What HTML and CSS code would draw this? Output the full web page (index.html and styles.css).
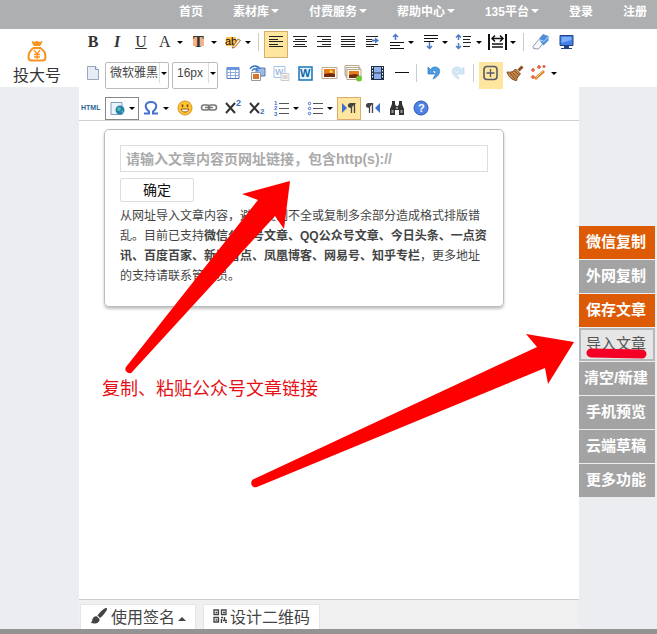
FILE: index.html
```
<!doctype html>
<html lang="zh-CN">
  <head>
    <meta charset="UTF-8" />
    <meta name="viewport" content="width=device-width, initial-scale=1.0" />
    <title>135编辑器</title>
    <link rel="stylesheet" href="styles.css">
  </head>
  <body>
    <nav class="topnav">
      <a href="#">首页</a>
      <a href="#" class="more">素材库</a>
      <a href="#" class="more">付费服务</a>
      <a href="#" class="more">帮助中心</a>
      <a href="#" class="more">135平台</a>
      <a href="#">登录</a>
      <a href="#">注册</a>
    </nav>

    <main class="workspace">
      <aside class="left">
        <a href="#" class="brand">
          <svg width="22" height="22" viewBox="0 0 22 22" fill="none" stroke="#f7941d" stroke-width="2">
            <path d="M6 1.500l2 1 3-1 3 1 2-1-2 4H8z" fill="#f7941d" stroke-width="1" />
            <path d="M7.500 8h7c3 2 5 6 5 9 0 2-1 3.500-3 3.500h-11c-2 0-3-1.500-3-3.500 0-3 2-7 5-9z" />
            <path d="M8 10l3 4 3-4M11 14v5M8 14.500h6M8 17h6" stroke-width="1.300" />
          </svg>
          <span>投大号</span>
        </a>
      </aside>

      <section class="editor">
        <div class="toolbar">
          <div class="row">
            <button class="tool letter semi" aria-label="加粗">B</button>
            <button class="tool letter italic" aria-label="斜体">I</button>
            <button class="tool letter underline" aria-label="下划线">U</button>
            <button class="tool letter drop" aria-label="字体边框">A</button>
            <button class="tool letter semi drop" aria-label="字体颜色"><span class="forecolor">T</span></button>
            <button class="tool drop" aria-label="背景色">
              <svg viewBox="0 0 20 20"><path d="M3 5h10v9H3z" fill="#ffbd4a" /><text x="2" y="13" font-size="11" fill="#111">ab</text><path d="M9 16l6-9 2.500 1.500-6 7z" fill="#fff3cf" stroke="#b5651d" /></svg>
            </button>
            <span class="sep"></span>
            <button class="tool on" aria-label="左对齐">
              <svg viewBox="0 0 20 20"><path d="M3 4.500h14M3 7.500h9M3 9.500h14M3 12.500h9M3 14.500h14" stroke="#222" /></svg>
            </button>
            <button class="tool" aria-label="居中">
              <svg viewBox="0 0 20 20"><path d="M3 4.500h14M5 7.500h10M3 9.500h14M5 12.500h10M3 14.500h14" stroke="#222" /></svg>
            </button>
            <button class="tool" aria-label="右对齐">
              <svg viewBox="0 0 20 20"><path d="M3 4.500h14M8 7.500h9M3 9.500h14M8 12.500h9M3 14.500h14" stroke="#222" /></svg>
            </button>
            <button class="tool" aria-label="两端对齐">
              <svg viewBox="0 0 20 20"><path d="M3 4.500h14M3 7.500h14M3 9.500h14M3 12.500h14M3 14.500h14" stroke="#222" /></svg>
            </button>
            <button class="tool" aria-label="首行缩进">
              <svg viewBox="0 0 20 20"><path d="M4 4.500h12M4 7.500h6M4 9.500h6M4 12.500h12M4 14.500h8" stroke="#222" /><path d="M10 8.500h4" stroke="#4b79c4" stroke-width="2" /><path d="M13 5.500l4 3-4 3z" fill="#4b79c4" /></svg>
            </button>
            <button class="tool drop" aria-label="段前距">
              <svg viewBox="0 0 20 20"><path d="M4 10.500h14M4 13.500h10M4 16.500h14" stroke="#111" /><path d="M9.500 8V2.500M7 5L9.500 2.500 12 5" fill="none" stroke="#4b79c4" stroke-width="1.500" /></svg>
            </button>
            <button class="tool drop" aria-label="段后距">
              <svg viewBox="0 0 20 20"><path d="M4 3.500h14M4 6.500h14M4 9.500h10" stroke="#111" /><path d="M9.500 10v6.500M7 14l2.500 2.500 2.500-2.500" fill="none" stroke="#4b79c4" stroke-width="1.500" /></svg>
            </button>
            <button class="tool drop" aria-label="行间距">
              <svg viewBox="0 0 20 20"><path d="M9 4.500h8M9 7.500h7M9 10.500h8M9 14.500h7" stroke="#222" /><path d="M4.500 8V3M2 5.500L4.500 3 7 5.500M4.500 11v6M2 14l2.500 2.500L7 14" fill="none" stroke="#4b79c4" stroke-width="1.500" /></svg>
            </button>
            <button class="tool drop" aria-label="字间距">
              <svg viewBox="0 0 20 20"><path d="M1 2v16M18 2v16" stroke="#111" stroke-width="2" /><path d="M4 6.500h11M7 3.500l-3 3 3 3M12 3.500l3 3-3 3M4 12h11M4 15h11" fill="none" stroke="#111" stroke-width="1.500" /></svg>
            </button>
            <span class="sep"></span>
            <button class="tool" aria-label="清除格式">
              <svg viewBox="0 0 20 20"><path d="M2 14.500L12 2.500l5.500 2-10 12.500-5-.5z" fill="#f4f8fd" stroke="#8d9bb0" /><path d="M8 7.500l4-5 5.500 2v4l-5 5z" fill="#4c8edb" /><path d="M8 7.500l5 2 4.500-5" fill="none" stroke="#bcdcff" /></svg>
            </button>
            <button class="tool" aria-label="全屏">
              <svg viewBox="0 0 20 20"><path d="M5 3.500h13v10H5z" fill="#4180e8" stroke="#24427e" /><path d="M6.500 5h10v3l-10 3z" fill="#77adfa" /><path d="M9 14h5v2H9z" fill="#24427e" /><path d="M6 16.500h11" stroke="#24427e" /></svg>
            </button>
          </div>

          <div class="row">
            <button class="tool" aria-label="新建">
              <svg viewBox="0 0 20 20"><path d="M4.500 3.500h8l3 3v10h-11z" fill="#e6ecf4" stroke="#9aa7b8" /><path d="M12.500 3.500v3h3" fill="#fff" stroke="#8295ad" /></svg>
            </button>
            <div class="combo family">
              <select aria-label="字体"><option>微软雅黑</option><option>宋体</option></select>
              <span class="arrow"></span>
            </div>
            <div class="combo size">
              <select aria-label="字号"><option>16px</option><option>14px</option></select>
              <span class="arrow"></span>
            </div>
            <button class="tool" aria-label="表格">
              <svg viewBox="0 0 20 20"><path d="M4 4.500h12v11H4z" fill="#fff" stroke="#5177bb" /><path d="M4 4h12v3H4z" fill="#6796df" /><path d="M4 9.500h12M4 12.500h12M7.500 7v8M12.500 7v8" stroke="#8eace0" /></svg>
            </button>
            <button class="tool" aria-label="截图">
              <svg viewBox="0 0 20 20"><path d="M9 5h9v8H9z" fill="#9dbce8" stroke="#5a78aa" /><path d="M3 6c2-4 8-4 10 0M5 8c1-3 5-3 6 0" fill="none" stroke="#3978c3" stroke-width="1.300" /><path d="M4.500 9.500h9v8h-9z" fill="#fff" stroke="#999" /><path d="M6 11h6v5H6z" fill="#d8742b" /></svg>
            </button>
            <button class="tool" aria-label="word转存">
              <svg viewBox="0 0 20 20" opacity=".5"><path d="M3 3.500h11v11H3z" fill="#fff" stroke="#4c8bcc" /><text x="4" y="12" font-size="9" font-weight="bold" fill="#3a7fc4">W</text><path d="M10 10.500h8v7h-8z" fill="#eee" stroke="#999" /><path d="M11.500 12h5v4h-5z" fill="#b9b2aa" /></svg>
            </button>
            <button class="tool" aria-label="导入word">
              <svg viewBox="0 0 20 20"><path d="M4 4h13v13H4z" fill="#e9f5ff" stroke="#1976b8" stroke-width="1.500" /><text x="5" y="14" font-size="11" font-weight="bold" fill="#0a65a8">W</text></svg>
            </button>
            <button class="tool" aria-label="图片">
              <svg viewBox="0 0 20 20"><path d="M3 4.500h15v11H3z" fill="#fff" stroke="#b9a78b" /><path d="M5 6h11v8H5z" fill="#e77c14" /><path d="M5 11l6-1 5 1v3H5z" fill="#762a0b" /><circle cx="12" cy="8.500" r="1.500" fill="#ffd84c" /></svg>
            </button>
            <button class="tool" aria-label="多图上传">
              <svg viewBox="0 0 20 20"><path d="M2 2.500h14v10H2zM3 4.500h14v10H3z" fill="#fff" stroke="#b9a78b" /><path d="M4 6.500h14v10H4z" fill="#fff" stroke="#b9a78b" /><path d="M6 8h10v7H6z" fill="#e77c14" /><path d="M6 12l6-1 4 1v3H6z" fill="#762a0b" /><circle cx="16" cy="15.500" r="3" fill="#71c837" /></svg>
            </button>
            <button class="tool" aria-label="视频">
              <svg viewBox="0 0 20 20"><path d="M4 3h13v14H4z" fill="#222e48" /><path d="M7 4h7v5.500H7zM7 10.500h7V16H7z" fill="#8caeea" /><path d="M5.500 4v12M15.500 4v12" stroke="#fff" stroke-dasharray="1.500 1.500" /></svg>
            </button>
            <button class="tool" aria-label="分隔线">
              <svg viewBox="0 0 20 20"><path d="M4 9.500h14" stroke="#111" /></svg>
            </button>
            <span class="sep"></span>
            <button class="tool" aria-label="撤销">
              <svg viewBox="0 0 20 20"><path d="M4 4v7h7L8.500 8.500c3-2 5 .5 1.500 5.500l-1 2c8-3 9-12 2-12-2 0-3.500.8-4.500 2.500z" fill="#4a9be0" stroke="#2c79bd" stroke-width=".7" /></svg>
            </button>
            <button class="tool" aria-label="重做">
              <svg viewBox="0 0 20 20"><path d="M16 4v7H9l2.500-2.500c-3-2-5 .5-1.500 5.500l1 2C3 13 2 4 9 4c2 0 3.500.8 4.500 2.500z" fill="#d3e8f6" stroke="#b8d5e8" stroke-width=".7" /></svg>
            </button>
            <span class="sep"></span>
            <button class="tool on flat" aria-label="插入框">
              <svg viewBox="0 0 20 20"><rect x="3" y="3.500" width="13" height="13" rx="3" fill="none" stroke="#555b68" stroke-width="1.600" /><path d="M9.500 6v8M5.500 10h8" stroke="#555b68" stroke-width="1.300" /></svg>
            </button>
            <button class="tool" aria-label="格式刷">
              <svg viewBox="0 0 20 20"><path d="M17.500 3.500l-4 4" stroke="#8d4f1d" stroke-width="3" /><path d="M2 9c4 .5 6 0 8.500-3l5 5c-2.500 2-3.500 4-4 6.500C7 17 3.500 14 2 9z" fill="#c98a4b" stroke="#78441a" /><path d="M9 7.500l5 4.500M5 10l5 6M7.500 9.500l4.500 5" stroke="#7c4b22" /></svg>
            </button>
            <button class="tool drop" aria-label="自动排版">
              <svg viewBox="0 0 20 20"><path d="M6 16L15 8" stroke="#d8842e" stroke-width="3" /><path d="M7 15l7-7" stroke="#ffd07e" /><path d="M4 5v4M2 7h4M10 2v4M8 4h4M15 2v3M13.500 3.500h3M4 12v4M2 14h4" stroke="#e85d37" stroke-width="1.500" /></svg>
            </button>
          </div>

          <div class="row last">
            <button class="tool html" aria-label="源代码">HTML</button>
            <button class="tool drop framed" aria-label="背景">
              <svg viewBox="0 0 20 20"><path d="M4 4.500h11v12H4z" fill="#e9f3fd" stroke="#7e9cbd" /><circle cx="13" cy="12" r="4.500" fill="#2583ae" /><path d="M11 9l3 1-1 3-3-1zM14 14l2-2v3z" fill="#62c2a0" /></svg>
            </button>
            <button class="tool drop" aria-label="特殊字符">
              <svg viewBox="0 0 20 20"><path d="M3 15.500h5v-2C2.500 9 4.500 4 10 4s7.500 5 2 9.500v2h5" fill="none" stroke="#476fd0" stroke-width="2" /></svg>
            </button>
            <button class="tool" aria-label="表情">
              <svg viewBox="0 0 20 20"><circle cx="10" cy="10" r="7" fill="#ffc735" stroke="#d99013" /><path d="M7.500 6.500v2.500M12.500 6.500v2.500" stroke="#744000" stroke-width="1.600" /><path d="M6 11h8c-.5 4-7.500 4-8 0z" fill="#fff" stroke="#98540b" /></svg>
            </button>
            <button class="tool" aria-label="超链接">
              <svg viewBox="0 0 20 20" fill="none" stroke="#777" stroke-width="1.500"><rect x="2.500" y="7" width="8" height="5" rx="2.500" /><rect x="9.500" y="7" width="8" height="5" rx="2.500" /><path d="M6 9.500h8" /></svg>
            </button>
            <button class="tool" aria-label="上标">
              <svg viewBox="0 0 20 20"><path d="M3 5l9 10M12 5l-9 10" stroke="#333" stroke-width="2" /><text x="13" y="8" font-size="9" font-weight="bold" fill="#3e6dc1">2</text></svg>
            </button>
            <button class="tool" aria-label="下标">
              <svg viewBox="0 0 20 20"><path d="M3 5l9 10M12 5l-9 10" stroke="#333" stroke-width="2" /><text x="13" y="16" font-size="8" font-weight="bold" fill="#3e6dc1">2</text></svg>
            </button>
            <button class="tool drop" aria-label="有序列表">
              <svg viewBox="0 0 20 20"><path d="M8 5.500h10M8 10.500h10M8 15.500h10" stroke="#555" /><g font-size="6" font-weight="bold" fill="#416fd0"><text x="3" y="7">1</text><text x="3" y="12">2</text><text x="3" y="18">3</text></g></svg>
            </button>
            <button class="tool drop" aria-label="无序列表">
              <svg viewBox="0 0 20 20"><path d="M8 5.500h10M8 10.500h10M8 15.500h10" stroke="#555" /><g fill="#fff" stroke="#416fd0"><circle cx="4.500" cy="5.500" r="1.200" /><circle cx="4.500" cy="10.500" r="1.200" /><circle cx="4.500" cy="15.500" r="1.200" /></g></svg>
            </button>
            <button class="tool on" aria-label="从左向右">
              <svg viewBox="0 0 20 20"><path d="M3 5l5 5-5 5z" fill="#3e70d1" /><path d="M17 5h-6c-3 1-3 5 1 5z" fill="#444" /><path d="M12.500 5v10M15.500 5v10" stroke="#444" stroke-width="1.300" /></svg>
            </button>
            <button class="tool" aria-label="从右向左">
              <svg viewBox="0 0 20 20"><path d="M17 5l-5 5 5 5z" fill="#3e70d1" /><path d="M10 5H5c-3 1-3 5 1 5z" fill="#444" /><path d="M6.500 5v10M9.500 5v10" stroke="#444" stroke-width="1.300" /></svg>
            </button>
            <button class="tool" aria-label="查找替换">
              <svg viewBox="0 0 20 20" fill="#333"><path d="M5 3h3v3l1 2h2l1-2V3h3v3l2 5v6h-5v-5H8v5H3v-6l2-5z" /><path d="M4.500 12h2v3h-2zM13.500 12h2v3h-2zM9 9h2v2H9z" fill="#999" /></svg>
            </button>
            <button class="tool" aria-label="帮助">
              <svg viewBox="0 0 20 20"><circle cx="10" cy="10" r="7" fill="#4f82e5" stroke="#2c55af" /><text x="7" y="14" font-size="11" font-weight="bold" fill="#fff">?</text></svg>
            </button>
          </div>
        </div>

        <div class="canvas">
          <form class="import">
            <input type="text" aria-label="文章网址" placeholder="请输入文章内容页网址链接，包含http(s)://">
            <button type="button">确定</button>
            <p>从网址导入文章内容，避免复制不全或复制多余部分造成格式排版错乱。目前已支持<b>微信公众号文章、QQ公众号文章、今日头条、一点资讯、百度百家、新浪看点、凤凰博客、网易号、知乎专栏</b>，更多地址的支持请联系管理员。</p>
          </form>
          <p class="hint">复制、粘贴公众号文章链接</p>
        </div>

        <div class="bottombar">
          <button>
            <svg width="18" height="18" viewBox="0 0 18 18" fill="#444"><path d="M16.500 1c1 .5.500 1.500 0 2.500-2 3-4 6-6.500 7.500L7.500 8.500C9.500 5.500 13 2 15.500 1z" /><path d="M7 9.500l2.500 2.500c.5 4-5 6-9 3.500 2-.5 1.500-2 2-3.500C3.500 10 5 9 7 9.500z" /></svg>
            使用签名
            <span class="up"></span>
          </button>
          <button>
            <svg width="14" height="14" viewBox="0 0 14 14" fill="none" stroke="#444"><path d="M1 1h4.500v4.500H1zM8.500 1H13v4.500H8.500zM1 8.500h4.500V13H1z" stroke-width="1.300" /><path d="M2.500 3.500h2M10 3.500h2M2.500 11h2M8 8.500h2M11.500 8v3M8.500 10v4M10 11.500h4M12 13.500h2" stroke-width="1.500" /></svg>
            设计二维码
          </button>
        </div>
      </section>

      <aside class="right">
        <button class="hot">微信复制</button>
        <button>外网复制</button>
        <button class="hot">保存文章</button>
        <button class="active">导入文章</button>
        <button>清空/新建</button>
        <button>手机预览</button>
        <button>云端草稿</button>
        <button>更多功能</button>
      </aside>
    </main>

    <!-- guide arrows drawn over the editor -->
    <svg class="guide" width="657" height="500" viewBox="0 0 657 500" fill="#fe0000">
      <path d="M290 181L242 194 258 200 126 367A4 4 0 0 0 133 371L275 216 284 229z" />
      <path d="M574 342L526 334 537 347 254 479A4 4 0 0 0 257 487L545 368 548 384z" />
      <path d="M591 353L642 354" stroke="#f40027" stroke-width="9" stroke-linecap="round" />
    </svg>
  </body>
</html>
```
FILE: styles.css
```
* {
  box-sizing: border-box;
}
body {
  margin: 0;
  min-height: 100vh;
  display: flex;
  flex-direction: column;
  position: relative;
  background: #ecedf0;
  color: #444;
  font-family: "Liberation Sans", "Noto Sans CJK SC", sans-serif;
  font-size: 12px;
}
a {
  color: inherit;
  text-decoration: none;
}
button,
input,
select {
  font-family: inherit;
  margin: 0;
}

.topnav {
  height: 29px;
  padding: 0 10px 8px;
  display: flex;
  justify-content: flex-end;
  align-items: center;
  gap: 30px;
  background: #adafb1;
  color: #fff;
  font-weight: bold;
}
.more {
  display: flex;
  align-items: center;
  gap: 2px;
}
.more::after {
  content: "";
  border: 4px solid transparent;
  border-top-color: #fff;
  border-bottom: 0;
}

.workspace {
  flex: 1;
  display: grid;
  grid-template-columns: 79px 1fr 78px;
  border-bottom: 5px solid #939393;
}
.brand {
  height: 58px;
  padding: 11px 5px 0 0;
  display: flex;
  flex-direction: column;
  align-items: center;
  background: #fff;
  color: #333;
  font-size: 16px;
  line-height: 28px;
}
.brand svg {
  flex: none;
}
.editor {
  display: flex;
  flex-direction: column;
  background: #fff;
}

/* toolbar */
.toolbar {
  padding: 2px 2px 0;
  border-bottom: 1px solid #d0d0d0;
}
.row {
  display: flex;
  height: 27px;
  margin-bottom: 4px;
}
.row + .row {
  margin-bottom: 8px;
}
.row.last {
  height: 23px;
  margin-bottom: 0;
}
.tool {
  flex: none;
  width: 24px;
  padding: 1px 2px;
  display: flex;
  border: 0;
  background: none;
}
.tool svg {
  flex: none;
  width: 20px;
  height: 20px;
}
.drop {
  width: 34px;
}
.drop::after {
  content: "";
  flex: none;
  margin: 9px 0 0 2px;
  border: 3px solid transparent;
  border-top-color: #000;
  border-bottom: 0;
}
.on {
  background: #ffe69f;
  box-shadow: inset 0 0 0 1px #dcac6c;
}
.flat {
  box-shadow: none;
}
.framed {
  box-shadow: inset 0 0 0 1px #888;
}
.letter {
  justify-content: center;
  color: #333;
  font-family: "Liberation Serif", serif;
  font-size: 16px;
  line-height: 20px;
}
.letter.drop {
  padding: 1px 4px 1px 6px;
  justify-content: space-between;
}
.semi {
  font-weight: bold;
}
.italic {
  font-style: italic;
  font-weight: bold;
}
.underline {
  text-decoration: underline;
}
.forecolor {
  height: 16px;
  background: linear-gradient(transparent 4px, #f7b28c 4px, #f7b28c 14px, transparent 14px);
}
.html {
  padding: 1px 0;
  color: #2a6496;
  font-size: 7px;
  font-weight: bold;
  line-height: 20px;
}
.sep {
  width: 1px;
  height: 18px;
  margin: 2px 5px 0 3px;
  background: #ccc;
}
.combo {
  height: 27px;
  margin-right: 3px;
  display: flex;
  border: 1px solid #bbb;
  border-radius: 2px;
}
.combo select {
  flex: 1;
  min-width: 0;
  height: 20px;
  padding: 0 0 0 4px;
  border: 0;
  appearance: none;
  background: none;
  color: #444;
  font-size: 12px;
}
.family {
  width: 64px;
}
.size {
  width: 46px;
}
.arrow {
  width: 9px;
  height: 20px;
  padding: 9px 1px 0;
  border-left: 1px solid #ddd;
}
.arrow::after {
  content: "";
  display: block;
  border: 3px solid transparent;
  border-top-color: #000;
  border-bottom: 0;
}

/* writing area */
.canvas {
  flex: 1;
  padding: 8px 25px;
}
.import {
  max-width: 400px;
  padding: 15px 15px 20px;
  border: 1px solid #bbb;
  border-radius: 5px;
  box-shadow: 0 2px 3px rgba(0, 0, 0, 0.25);
}
.import input {
  display: block;
  width: 100%;
  height: 27px;
  padding: 0 5px;
  border: 1px solid #ddd;
  font-size: 14px;
}
.import input::placeholder {
  color: #aaa;
  font-weight: bold;
}
.import button {
  width: 74px;
  height: 24px;
  margin-top: 6px;
  padding: 0;
  border: 1px solid #ddd;
  border-radius: 2px;
  background: #fff;
  color: #111;
  font-size: 14px;
  line-height: 20px;
}
.import p {
  margin: 4px 0 0;
  line-height: 20px;
}
.hint {
  margin: 68px 0 0 -2px;
  color: #e60f14;
  font-size: 18px;
  line-height: 28px;
}

.bottombar {
  height: 30px;
  padding: 4px 1px 0;
  display: flex;
  gap: 7px;
  border-top: 1px solid #ccc;
  background: #f0f0f0;
}
.bottombar button {
  height: 25px;
  padding: 0 9px 2px;
  display: flex;
  align-items: center;
  gap: 3px;
  border: 1px solid #e4e4e4;
  border-bottom: 0;
  background: #fff;
  color: #444;
  font-size: 16px;
}
.up {
  margin-top: 6px;
  border: 4px solid transparent;
  border-bottom-color: #444;
  border-top: 0;
}

/* side actions */
.right {
  padding: 139px 2px 0 0;
  border-top: 58px solid #fff;
}
.right button {
  display: block;
  width: 100%;
  height: 33px;
  margin-bottom: 1px;
  padding: 0 2px 4px 0;
  border: 0;
  background: #a3a3a3;
  color: #fff;
  font-size: 15px;
  font-weight: bold;
}
.right .hot {
  background: #dc5b04;
}
.right .active {
  background: #e6e6e6;
  box-shadow: inset 0 0 0 2px #b5b8ba;
  color: #555;
  font-weight: normal;
}

.guide {
  position: absolute;
  top: 0;
  left: 0;
  pointer-events: none;
}
```
